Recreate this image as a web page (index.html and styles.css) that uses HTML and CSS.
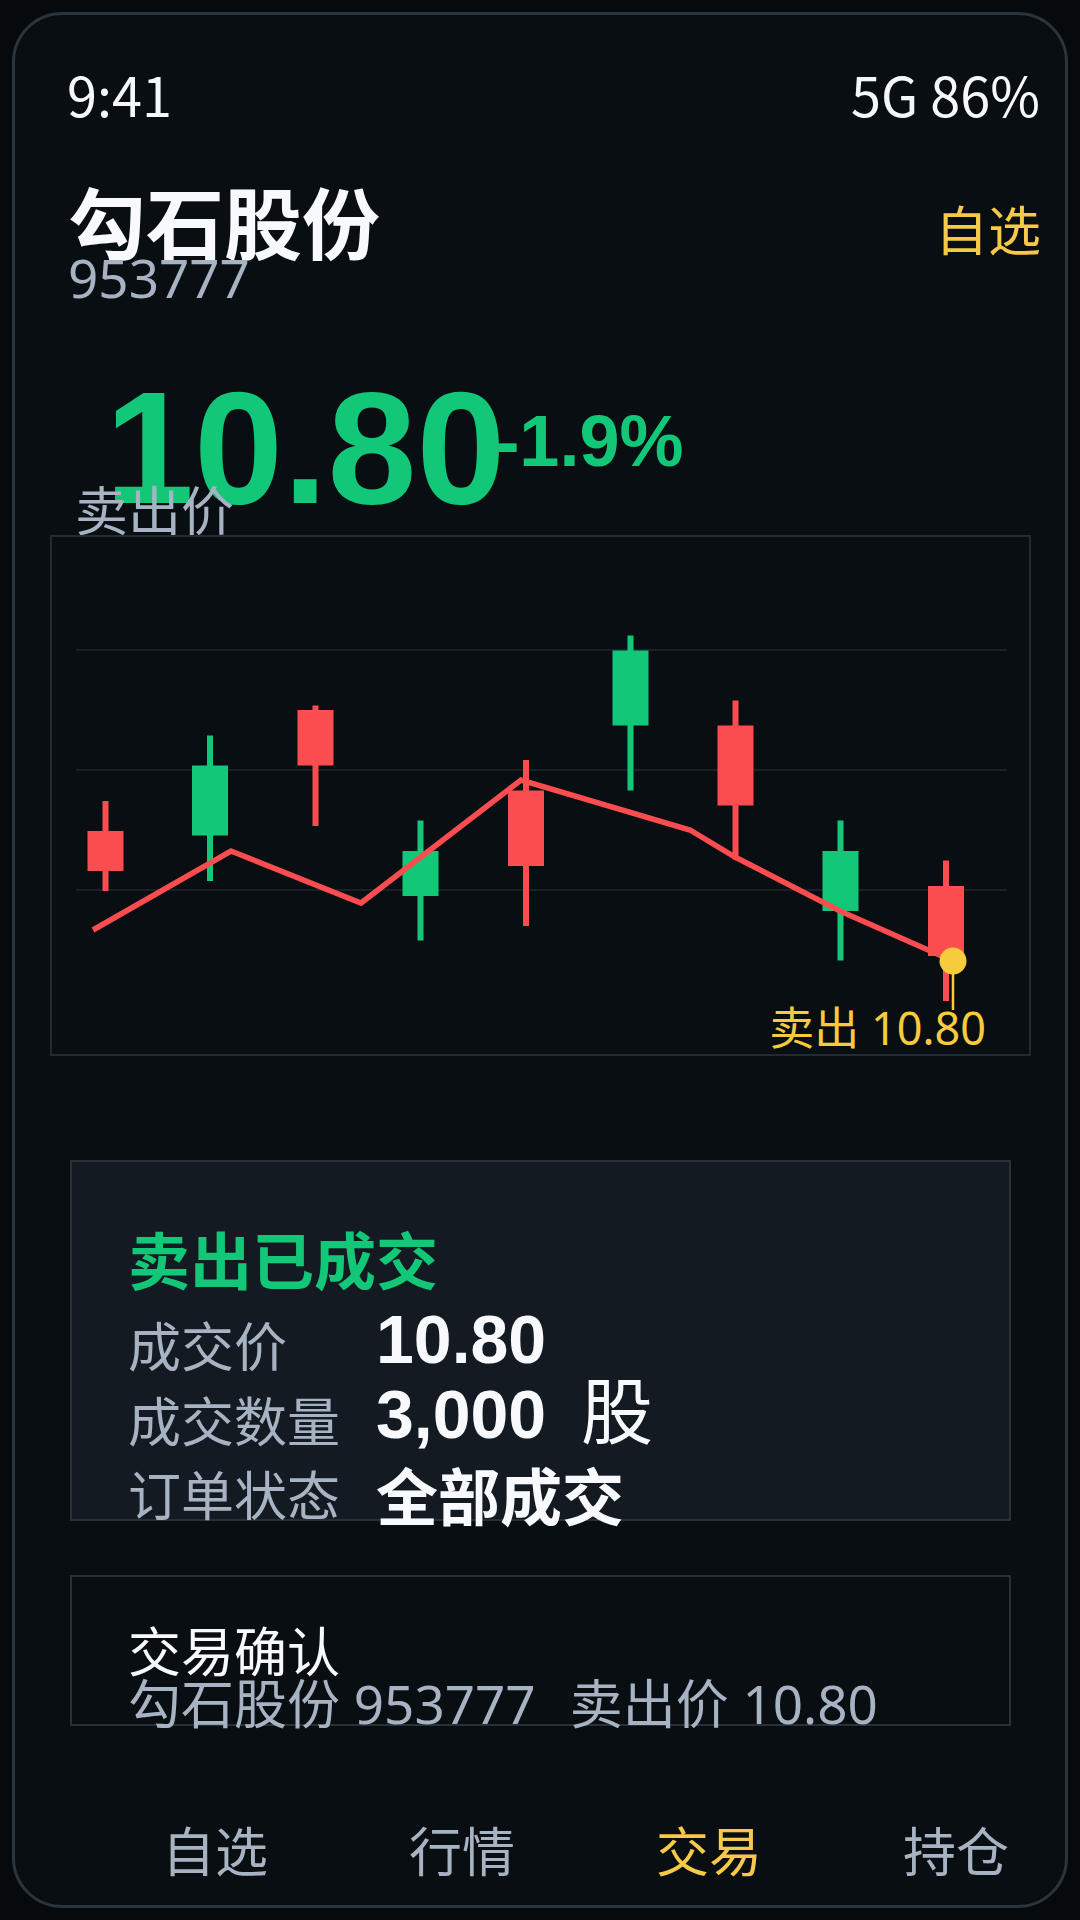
FILE: index.html
```html
<!DOCTYPE html>
<html lang="zh-CN">
<head>
<meta charset="utf-8">
<title>勾石股份 953777</title>
<link rel="stylesheet" href="styles.css">
</head>
<body>
<div class="phone">
  <div class="status"><span>9:41</span><span>5G 86%</span></div>

  <header class="head">
    <div class="stock">
      <h1 class="stock-name">勾石股份</h1>
      <div class="stock-code">953777</div>
    </div>
    <div class="watch">自选</div>
  </header>

  <div class="price-row">
    <span class="price">10.80</span>
    <span class="change">-1.9%</span>
  </div>
  <div class="price-label">卖出价</div>

  <div class="chart">
    <svg class="chart-svg" viewBox="52 537 977 517" width="977" height="517">
      <g class="grid">
        <line x1="76" y1="650" x2="1007" y2="650"/>
        <line x1="76" y1="770" x2="1007" y2="770"/>
        <line x1="76" y1="890" x2="1007" y2="890"/>
      </g>
      <g class="down">
        <rect x="102.5" y="801" width="6" height="90"/>
        <rect x="87.5" y="831" width="36" height="40"/>
        <rect x="312.5" y="705.5" width="6" height="120.5"/>
        <rect x="297.5" y="710" width="36" height="55.5"/>
        <rect x="523" y="760" width="6" height="166"/>
        <rect x="508" y="790.5" width="36" height="75.5"/>
        <rect x="732.5" y="700.5" width="6" height="159"/>
        <rect x="717.5" y="725.5" width="36" height="80"/>
        <rect x="943" y="860.5" width="6" height="140.5"/>
        <rect x="928" y="886" width="36" height="70"/>
      </g>
      <g class="up">
        <rect x="207" y="735.5" width="6" height="145.5"/>
        <rect x="192" y="765.5" width="36" height="70"/>
        <rect x="417.5" y="820.5" width="6" height="120"/>
        <rect x="402.5" y="851" width="36" height="45"/>
        <rect x="627.5" y="635.5" width="6" height="155"/>
        <rect x="612.5" y="650.5" width="36" height="75"/>
        <rect x="837.5" y="820.5" width="6" height="140"/>
        <rect x="822.5" y="851" width="36" height="60"/>
      </g>
      <polyline class="ma" points="93,930 231,851 361,903 521,780 690,830 735,857 840,911 953,961"/>
      <line class="tag-line" x1="953" y1="961" x2="953" y2="1010"/>
      <circle class="tag-dot" cx="953" cy="961" r="13.5"/>
      <text class="tag-text" x="986" y="1045" text-anchor="end">卖出 10.80</text>
    </svg>
  </div>

  <section class="card deal">
    <div class="deal-title">卖出已成交</div>
    <div class="deal-grid">
      <div class="k">成交价</div><div class="v num">10.80</div>
      <div class="k">成交数量</div><div class="v num">3,000 <span class="unit">股</span></div>
      <div class="k">订单状态</div><div class="v txt">全部成交</div>
    </div>
  </section>

  <section class="card confirm">
    <div class="confirm-title">交易确认</div>
    <div class="confirm-line"><span>勾石股份 953777</span><span class="sep">卖出价 10.80</span></div>
  </section>

  <nav class="tabs">
    <span class="tab">自选</span>
    <span class="tab">行情</span>
    <span class="tab active">交易</span>
    <span class="tab">持仓</span>
  </nav>
</div>
</body>
</html>
```

FILE: styles.css
```css
* {
  box-sizing: border-box;
  margin: 0;
  padding: 0;
}

html,
body {
  background: #060a0d;
}

body {
  width: 1080px;
  height: 1920px;
  overflow: hidden;
  font-family: "Noto Sans CJK SC", "Noto Sans", sans-serif;
  color: #f5f8fb;
}

.phone {
  margin: 12px;
  width: 1056px;
  height: 1896px;
  border: 3px solid #2b333b;
  border-radius: 50px;
  background: #080e12;
  display: flex;
  flex-direction: column;
}

/* status bar */
.status {
  margin-top: 47px;
  padding: 0 25px 0 52px;
  display: flex;
  justify-content: space-between;
  font-size: 54px;
  line-height: 64px;
  color: #f5f8fb;
}

/* header */
.head {
  margin-top: 64px;
  padding: 0 24px 0 53px;
  display: flex;
  justify-content: space-between;
  align-items: flex-start;
}

.stock-name {
  font-size: 78px;
  font-weight: 700;
  line-height: 60px;
  color: #f7f9fc;
}

.stock-code {
  padding-top: 2px;
  font-family: "Noto Sans", "Noto Sans CJK SC", sans-serif;
  font-size: 53px;
  line-height: 52px;
  color: #a7b3c2;
}

.watch {
  font-size: 53px;
  line-height: 77px;
  color: #f7c948;
}

/* price */
.price-row {
  margin-top: 108px;
  padding-left: 90px;
  display: flex;
  align-items: flex-start;
}

.price {
  font-family: "Liberation Sans", Arial, sans-serif;
  font-weight: 700;
  font-size: 160px;
  line-height: 72px;
  color: #12c878;
}

.change {
  margin: 1px 0 0 -10px;
  font-family: "Liberation Sans", Arial, sans-serif;
  font-weight: 700;
  font-size: 72px;
  line-height: 56px;
  color: #12c878;
}

.price-label {
  margin-top: -2px;
  padding-left: 60px;
  font-size: 53px;
  line-height: 52px;
  color: #a7b3c2;
}

/* chart */
.chart {
  margin: 1px 0 0 35px;
  width: 981px;
  height: 521px;
  border: 2px solid #232b32;
}

.chart-svg {
  display: block;
  overflow: visible;
}

.grid line {
  stroke: #1f282e;
  stroke-width: 1.5;
}

.down rect {
  fill: #fb4d50;
}

.up rect {
  fill: #12c878;
}

.ma {
  fill: none;
  stroke: #fb4d50;
  stroke-width: 5.5;
  stroke-linejoin: miter;
}

.tag-line {
  stroke: #f8cb3d;
  stroke-width: 2.5;
}

.tag-dot {
  fill: #f8cb3d;
}

.tag-text {
  fill: #f8cb3d;
  font-family: "Noto Sans", "Noto Sans CJK SC", sans-serif;
  font-size: 45px;
}

/* cards */
.card {
  margin: 0 54px 0 55px;
  border: 2px solid #283038;
}

.deal {
  margin-top: 104px;
  height: 361px;
  padding: 51px 0 0 56px;
  background: #131a21;
}

.deal-title {
  font-size: 62px;
  font-weight: 700;
  line-height: 90px;
  color: #12c878;
}

.deal-grid {
  margin-top: 4px;
  display: grid;
  grid-template-columns: auto 1fr;
  column-gap: 36px;
  align-items: start;
}

.k {
  font-size: 53px;
  line-height: 74.5px;
  color: #a7b3c2;
}

.v {
  color: #f7f9fc;
  white-space: nowrap;
}

.num {
  font-family: "Liberation Sans", Arial, sans-serif;
  font-weight: 700;
  font-size: 68px;
  line-height: 64px;
}

.unit {
  margin-left: 16px;
  font-family: "Noto Sans CJK SC", sans-serif;
  font-weight: 400;
  font-size: 72px;
  line-height: 0;
}

.txt {
  font-weight: 700;
  font-size: 62px;
  line-height: 76px;
}

.confirm {
  margin-top: 54px;
  height: 151px;
  padding: 46px 0 0 56px;
  background: #080e12;
}

.confirm-title {
  font-size: 53px;
  line-height: 52.5px;
  color: #f7f9fc;
}

.confirm-line {
  padding-top: 2px;
  font-family: "Noto Sans", "Noto Sans CJK SC", sans-serif;
  font-size: 53px;
  line-height: 52.5px;
  color: #a7b3c2;
  white-space: nowrap;
}

.sep {
  margin-left: 34px;
}

/* bottom tabs */
.tabs {
  margin-top: auto;
  padding: 0 56px 24px 147px;
  display: flex;
  justify-content: space-between;
  font-size: 53px;
  line-height: 64px;
  color: #a7b3c2;
}

.tab.active {
  color: #f7c948;
}
```
